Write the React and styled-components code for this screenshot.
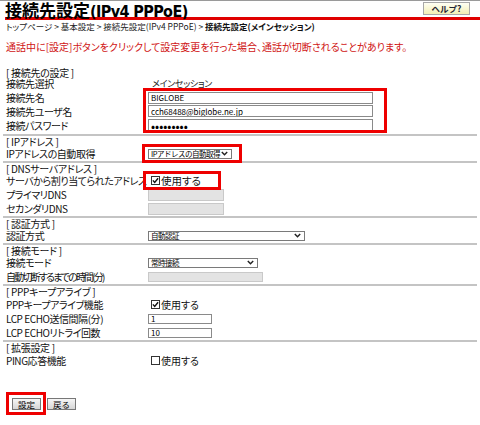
import React from 'react';
import styled, { createGlobalStyle, css } from 'styled-components';

const GlobalStyle = createGlobalStyle`
  html, body { margin: 0; padding: 0; background: #fff; }
  body {
    font-family: "Noto Sans CJK JP", "Noto Sans", sans-serif;
    color: #111;
    font-feature-settings: "palt";
  }
  * { box-sizing: border-box; }
`;

const Page = styled.div`
  width: 480px;
  min-height: 425px;
  border-top: 1px solid #9a9a9a;
  padding: 0 6px;
`;

const TitleBar = styled.header`
  display: flex;
  justify-content: space-between;
  align-items: flex-start;
  height: 19px;
  margin: 0 -6px 0 -1px;
  padding: 1px 10px 0 0;
  border-bottom: 3px solid #e00000;
`;

const Title = styled.h1`
  margin: 0;
  font-size: 17px;
  font-weight: 700;
  line-height: 16px;
  color: #000;
  white-space: nowrap;
`;

const TitleLatin = styled.span`
  font-family: "Liberation Sans Narrow", "DejaVu Sans Condensed", "Noto Sans CJK JP", sans-serif;
  font-size: 16px;
  letter-spacing: -0.6px;
`;

const HelpButton = styled.button`
  width: 47px;
  height: 13px;
  padding: 0;
  border: 1px solid #a8a8a8;
  background: linear-gradient(#fffff4, #f3efb4);
  color: #223;
  font-family: inherit;
  font-size: 8.5px;
  font-weight: 700;
  line-height: 11px;
`;

const Breadcrumb = styled.nav`
  margin-top: 1px;
  font-size: 8.5px;
  line-height: 11px;
  color: #222;
  white-space: nowrap;
`;

const Current = styled.strong`
  font-weight: 700;
  color: #111;
`;

const Notice = styled.p`
  margin: 9px 0 0;
  font-size: 10px;
  line-height: 12px;
  color: #d01414;
  white-space: nowrap;
`;

const Sections = styled.div`
  margin-top: 14px;
`;

const Section = styled.section`
  display: grid;
  grid-template-columns: 142px 1fr;
  grid-template-rows: ${p => p.$head}px;
  grid-auto-rows: ${p => p.$row}px;
  margin: 0 -3px;
  padding: 0 3px ${p => p.$pb || 0}px;
  ${p => !p.$first && css`border-top: 2px solid #c4c4c4;`}
`;

const SectionTitle = styled.div`
  grid-column: 1 / -1;
  display: flex;
  align-items: center;
  font-size: 10px;
  letter-spacing: -0.3px;
  white-space: pre;
  color: #111;
`;

const Label = styled.div`
  grid-column: 1;
  ${p => p.$row && css`grid-row: ${p.$row};`}
  font-size: 10px;
  letter-spacing: ${p => (p.$tight ? -1.8 : -0.45)}px;
  white-space: nowrap;
  display: flex;
  align-items: center;
  color: #111;
`;

const Value = styled.div`
  grid-column: 2;
  ${p => p.$row && css`grid-row: ${p.$row};`}
  display: flex;
  align-items: center;
  min-width: 0;
`;

const PlainText = styled.span`
  font-size: 9px;
  padding-left: 4px;
  letter-spacing: -0.3px;
  color: #222;
`;

const Mark = styled.div`
  position: relative;
  display: inline-flex;
  &::after {
    content: '';
    position: absolute;
    top: ${p => p.$in[0]}px;
    right: ${p => p.$in[1]}px;
    bottom: ${p => p.$in[2]}px;
    left: ${p => p.$in[3]}px;
    border: 3px solid #ee0000;
    pointer-events: none;
  }
`;

const InputStack = styled(Mark)`
  grid-column: 2;
  grid-row: 3 / span 3;
  justify-self: start;
  flex-direction: column;
  justify-content: space-around;
`;

const TextInput = styled.input`
  width: ${p => p.$w}px;
  height: ${p => p.$h || 12}px;
  margin: 0;
  padding: 0 2px;
  border: 1px solid #8a8a8a;
  background: #fff;
  color: #000;
  font-family: inherit;
  font-size: ${p => p.$fs || 8}px;
  outline: none;
  ${p => p.disabled && css`
    background: #e3e3e3;
    border-color: #c9c9c9;
  `}
`;

const SelectBox = styled.label`
  display: inline-flex;
  align-items: center;
  width: ${p => p.$w}px;
  height: 10px;
  border: 1px solid #7a7a7a;
  background: #fff;
`;

const NativeSelect = styled.select`
  appearance: none;
  flex: 1;
  min-width: 0;
  height: 100%;
  margin: 0;
  padding: 0 0 0 2px;
  border: 0;
  background: transparent;
  font-family: inherit;
  font-size: 7.5px;
  letter-spacing: -0.5px;
  line-height: 8px;
  color: #000;
  outline: none;
`;

const Chevron = styled.svg`
  flex: none;
  margin-right: 3px;
`;

const CheckLabel = styled.label`
  display: inline-flex;
  align-items: center;
  gap: 1px;
  padding-left: 3px;
  font-size: ${p => p.$fs || 10}px;
  line-height: 14px;
  color: #111;
`;

const ButtonRow = styled.div`
  display: flex;
  gap: 6px;
  margin-top: 30px;
  padding-left: 6px;
`;

const Btn = styled.button`
  height: 12px;
  padding: 0 5px;
  border: 1px solid #777;
  border-radius: 0;
  background: linear-gradient(#f6f6f6, #d6d6d6);
  color: #000;
  font-family: inherit;
  font-size: 8.5px;
  line-height: 10px;
`;

const Check = ({ checked }) => (
  <svg width="9" height="9" viewBox="0 0 9 9">
    <rect x="0.5" y="0.5" width="8" height="8" fill="#fff" stroke="#333" />
    {checked && (
      <path d="M1.9 4.4 L3.7 6.5 L7.1 2.2" fill="none" stroke="#111" strokeWidth="1.4" />
    )}
  </svg>
);

const Select = ({ w, value }) => (
  <SelectBox $w={w}>
    <NativeSelect defaultValue={value}>
      <option>{value}</option>
    </NativeSelect>
    <Chevron width="7" height="5" viewBox="0 0 7 5">
      <path d="M0.8 0.9 L3.5 3.8 L6.2 0.9" fill="none" stroke="#222" strokeWidth="1.4" />
    </Chevron>
  </SelectBox>
);

const CheckItem = ({ checked, fs }) => (
  <CheckLabel $fs={fs}>
    <Check checked={checked} />
    使用する
  </CheckLabel>
);

export default function App() {
  return (
    <>
      <GlobalStyle />
      <Page>
        <TitleBar>
          <Title>接続先設定<TitleLatin>(IPv4 PPPoE)</TitleLatin></Title>
          <HelpButton>ヘルプ?</HelpButton>
        </TitleBar>
        <Breadcrumb>
          トップページ &gt; 基本設定 &gt; 接続先設定(IPv4 PPPoE) &gt; <Current>接続先設定(メインセッション)</Current>
        </Breadcrumb>
        <Notice>通話中に[設定]ボタンをクリックして設定変更を行った場合、通話が切断されることがあります。</Notice>

        <Sections>
          <Section $first $head={10} $row={13.75} $pb={1.5}>
            <SectionTitle>[ 接続先の設定 ]</SectionTitle>
            <Label $row={2}>接続先選択</Label>
            <Value $row={2}><PlainText>メインセッション</PlainText></Value>
            <Label $row={3}>接続先名</Label>
            <Label $row={4}>接続先ユーザ名</Label>
            <Label $row={5}>接続パスワード</Label>
            <InputStack $in={[-2.75, -14, -1, -5]}>
              <TextInput $w={225} defaultValue="BIGLOBE" />
              <TextInput $w={225} defaultValue="cch68488@biglobe.ne.jp" />
              <TextInput $w={225} type="password" $fs={12} defaultValue="123456789" />
            </InputStack>
          </Section>

          <Section $head={11} $row={14}>
            <SectionTitle>[ IPアドレス ]</SectionTitle>
            <Label>IPアドレスの自動取得</Label>
            <Value>
              <Mark $in={[-4.5, -10, -4.5, -6]}>
                <Select w={84} value="IPアドレスの自動取得" />
              </Mark>
            </Value>
          </Section>

          <Section $head={11} $row={14}>
            <SectionTitle>[ DNSサーバアドレス ]</SectionTitle>
            <Label>サーバから割り当てられたアドレス</Label>
            <Value>
              <Mark $in={[-2.5, -20, -2.5, -5]}>
                <CheckItem checked fs={10.5} />
              </Mark>
            </Value>
            <Label>プライマリDNS</Label>
            <Value><TextInput $w={76} disabled /></Value>
            <Label>セカンダリDNS</Label>
            <Value><TextInput $w={76} disabled /></Value>
          </Section>

          <Section $head={11} $row={14}>
            <SectionTitle>[ 認証方式 ]</SectionTitle>
            <Label>認証方式</Label>
            <Value><Select w={157} value="自動認証" /></Value>
          </Section>

          <Section $head={11} $row={14}>
            <SectionTitle>[ 接続モード ]</SectionTitle>
            <Label>接続モード</Label>
            <Value><Select w={110} value="常時接続" /></Value>
            <Label $tight>自動切断するまでの時間(分)</Label>
            <Value><TextInput $w={115} $h={10} disabled /></Value>
          </Section>

          <Section $head={12} $row={14}>
            <SectionTitle>[ PPPキープアライブ ]</SectionTitle>
            <Label>PPPキープアライブ機能</Label>
            <Value><CheckItem checked /></Value>
            <Label>LCP ECHO送信間隔(分)</Label>
            <Value><TextInput $w={64} $h={10} defaultValue="1" /></Value>
            <Label>LCP ECHOリトライ回数</Label>
            <Value><TextInput $w={64} $h={10} defaultValue="10" /></Value>
          </Section>

          <Section $head={12} $row={14}>
            <SectionTitle>[ 拡張設定 ]</SectionTitle>
            <Label>PING応答機能</Label>
            <Value><CheckItem /></Value>
          </Section>
        </Sections>

        <ButtonRow>
          <Mark $in={[-6, -5, -5, -6]}>
            <Btn>設定</Btn>
          </Mark>
          <Btn>戻る</Btn>
        </ButtonRow>
      </Page>
    </>
  );
}
